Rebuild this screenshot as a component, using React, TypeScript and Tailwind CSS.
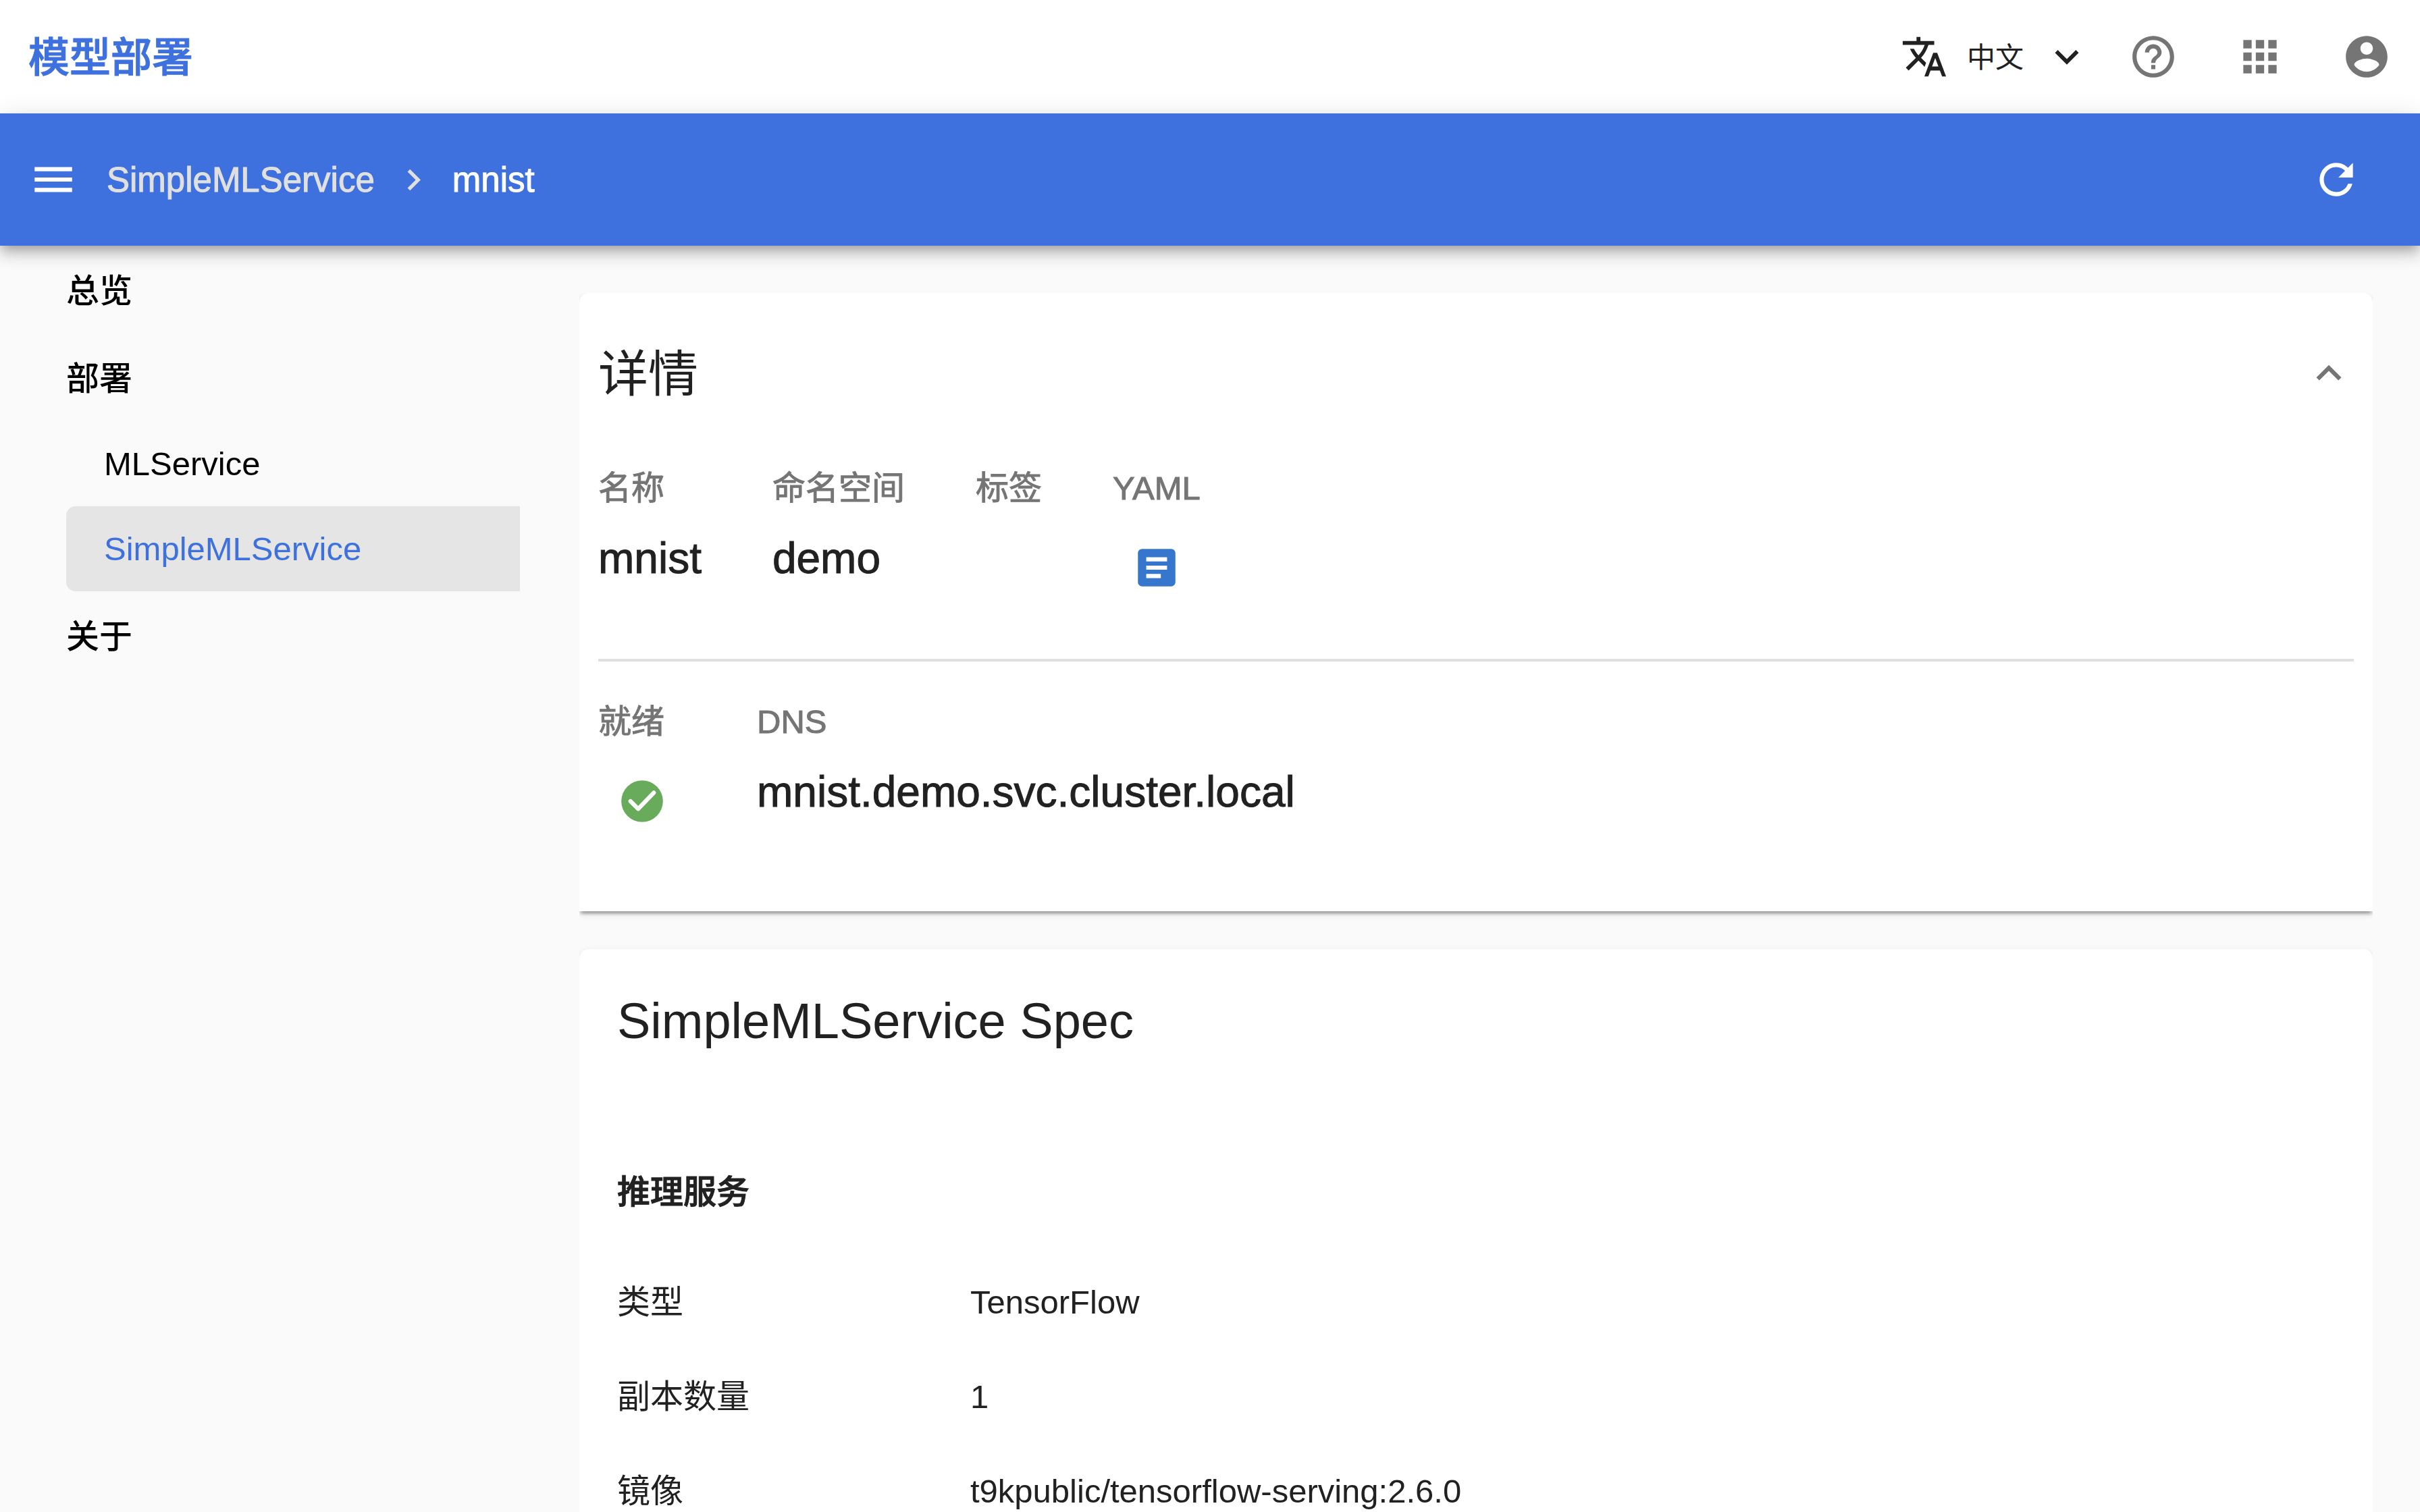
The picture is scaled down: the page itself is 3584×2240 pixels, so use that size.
import React from "react";

const PATHS = {
  translate:
    "M12.87 15.07l-2.54-2.51.03-.03c1.74-1.94 2.98-4.17 3.71-6.53H17V4h-7V2H8v2H1v1.99h11.17C11.5 7.92 10.44 9.75 9 11.35 8.07 10.32 7.3 9.19 6.69 8h-2c.73 1.63 1.73 3.17 2.98 4.56l-5.09 5.02L4 19l5-5 3.11 3.11.76-2.04zM18.5 10h-2L12 22h2l1.12-3h4.75L21 22h2l-4.5-12zm-2.62 7l1.62-4.33L19.12 17h-3.24z",
  expandMore: "M16.59 8.59L12 13.17 7.41 8.59 6 10l6 6 6-6z",
  expandLess: "M12 8l-6 6 1.41 1.41L12 10.83l4.59 4.58L18 14z",
  help: "M11 18h2v-2h-2v2zm1-16C6.48 2 2 6.48 2 12s4.48 10 10 10 10-4.48 10-10S17.52 2 12 2zm0 18c-4.41 0-8-3.59-8-8s3.59-8 8-8 8 3.59 8 8-3.59 8-8 8zm0-14c-2.21 0-4 1.79-4 4h2c0-1.1.9-2 2-2s2 .9 2 2c0 2-3 1.75-3 5h2c0-2.25 3-2.5 3-5 0-2.21-1.79-4-4-4z",
  apps: "M4 8h4V4H4v4zm6 12h4v-4h-4v4zm-6 0h4v-4H4v4zm0-6h4v-4H4v4zm6 0h4v-4h-4v4zm6-10v4h4V4h-4zm-6 4h4V4h-4v4zm6 6h4v-4h-4v4zm0 6h4v-4h-4v4z",
  account:
    "M12 2C6.48 2 2 6.48 2 12s4.48 10 10 10 10-4.48 10-10S17.52 2 12 2zm0 3c1.66 0 3 1.34 3 3s-1.34 3-3 3-3-1.34-3-3 1.34-3 3-3zm0 14.2c-2.5 0-4.71-1.28-6-3.22.03-1.99 4-3.08 6-3.08 1.99 0 5.97 1.09 6 3.08-1.29 1.94-3.5 3.22-6 3.22z",
  menu: "M3 18h18v-2H3v2zm0-5h18v-2H3v2zm0-7v2h18V6H3z",
  chevronRight: "M10 6L8.59 7.41 13.17 12l-4.58 4.59L10 18l6-6z",
  refresh:
    "M17.65 6.35C16.2 4.9 14.21 4 12 4c-4.42 0-7.99 3.58-7.99 8s3.57 8 7.99 8c3.73 0 6.84-2.55 7.73-6h-2.08c-.82 2.33-3.04 4-5.65 4-3.31 0-6-2.69-6-6s2.69-6 6-6c1.66 0 3.14.69 4.22 1.78L13 11h7V4l-2.35 2.35z",
  article:
    "M19 3H5c-1.1 0-2 .9-2 2v14c0 1.1.9 2 2 2h14c1.1 0 2-.9 2-2V5c0-1.1-.9-2-2-2zm-5 14H7v-2h7v2zm3-4H7v-2h10v2zm0-4H7V7h10v2z",
};

function Icon({ name, className = "size-[74px]" }: { name: keyof typeof PATHS; className?: string }) {
  return (
    <svg viewBox="0 0 24 24" fill="currentColor" aria-hidden="true" className={`shrink-0 ${className}`}>
      <path d={PATHS[name]} />
    </svg>
  );
}

function TopBar() {
  return (
    <header className="flex h-[168px] shrink-0 items-center justify-between bg-white px-[42px]">
      <h1 className="pt-1 text-[61px] leading-none font-medium text-[#3e71de] [-webkit-text-stroke:1px]">模型部署</h1>
      <div className="flex items-center gap-[84px] text-[#757575]">
        <div className="-mr-7 flex items-center gap-7 text-[#212121]">
          <Icon name="translate" className="size-[70px]" />
          <div className="grid items-center">
            <select
              aria-label="语言"
              className="col-start-1 row-start-1 appearance-none bg-transparent pt-1 pr-[98px] text-[42px] leading-[70px]"
            >
              <option>中文</option>
            </select>
            <Icon
              name="expandMore"
              className="pointer-events-none col-start-1 row-start-1 size-[70px] justify-self-end"
            />
          </div>
        </div>
        <button type="button" aria-label="帮助">
          <Icon name="help" />
        </button>
        <button type="button" aria-label="应用">
          <Icon name="apps" />
        </button>
        <button type="button" aria-label="账户">
          <Icon name="account" />
        </button>
      </div>
    </header>
  );
}

function Toolbar() {
  return (
    <div className="relative z-10 flex h-[196px] shrink-0 items-center bg-[#3e71de] pr-[87px] pl-[42px] text-white shadow-[0_7px_14px_-4px_rgba(0,0,0,0.2),0_14px_18px_0_rgba(0,0,0,0.14),0_4px_35px_0_rgba(0,0,0,0.12)]">
      <button type="button" aria-label="菜单">
        <Icon name="menu" />
      </button>
      <nav className="ml-[42px] flex flex-1 items-center gap-[26px] text-[51px] leading-none [-webkit-text-stroke:1px]">
        <a href="#list" className="text-[#e0e0e0]">
          SimpleMLService
        </a>
        <Icon name="chevronRight" className="size-[63px] text-[#e0e0e0]" />
        <span aria-current="page">mnist</span>
      </nav>
      <button type="button" aria-label="刷新">
        <Icon name="refresh" />
      </button>
    </div>
  );
}

const heading = "flex h-[130px] items-center pt-1 font-medium";
const entry = "flex h-[126px] items-center rounded-l-[14px] pl-14";

function Sidebar() {
  return (
    <aside className="w-[770px] shrink-0 pl-[98px] text-[49px] leading-none text-black">
      <nav>
        <a href="#overview" className={heading}>
          总览
        </a>
        <h2 className={heading}>部署</h2>
        <a href="#mlservice" className={entry}>
          MLService
        </a>
        <a href="#simplemlservice" aria-current="page" className={`${entry} bg-[#e5e5e5] text-[#3e71de]`}>
          SimpleMLService
        </a>
        <a href="#about" className={heading}>
          关于
        </a>
      </nav>
    </aside>
  );
}

function Field({ label, children }: { label: string; children?: React.ReactNode }) {
  return (
    <div className="flex flex-col gap-[14px]">
      <dt className="text-[49px] leading-[77px] text-[#757575] [-webkit-text-stroke:1px]">{label}</dt>
      <dd className="text-[64px] leading-[102px] [-webkit-text-stroke:1px]">{children}</dd>
    </div>
  );
}

const card =
  "rounded-t-[14px] bg-white shadow-[0_7px_4px_-4px_rgba(0,0,0,0.2),0_4px_4px_0_rgba(0,0,0,0.14),0_4px_11px_0_rgba(0,0,0,0.12)]";

function Details() {
  return (
    <section className={`${card} px-7 pb-[98px]`}>
      <div className="flex h-[238px] items-center justify-between">
        <h2 className="pt-1 text-[74px] leading-none">详情</h2>
        <button type="button" aria-label="收起" className="text-[#757575]">
          <Icon name="expandLess" />
        </button>
      </div>
      <dl className="flex gap-[105px] border-b-4 border-[#e0e0e0] pt-[13px] pb-[70px]">
        <Field label="名称">mnist</Field>
        <Field label="命名空间">demo</Field>
        <Field label="标签" />
        <Field label="YAML">
          <button type="button" aria-label="查看 YAML" className="block p-7 text-[#3676cc]">
            <Icon name="article" />
          </button>
        </Field>
      </dl>
      <dl className="flex gap-[105px] pt-[51px]">
        <Field label="就绪">
          <span role="img" aria-label="已就绪" className="block p-7">
            <svg viewBox="0 0 24 24" className="size-[74px]">
              <circle cx="12" cy="12" r="10" fill="#67ab5b" />
              <path
                d="M6.4 12l3.7 3.7 7.5-7.8"
                fill="none"
                stroke="#fff"
                strokeWidth="2"
                strokeLinecap="round"
                strokeLinejoin="round"
              />
            </svg>
          </span>
        </Field>
        <Field label="DNS">mnist.demo.svc.cluster.local</Field>
      </dl>
    </section>
  );
}

const SPEC = [
  ["类型", "TensorFlow"],
  ["副本数量", "1"],
  ["镜像", "t9kpublic/tensorflow-serving:2.6.0"],
];

function Spec() {
  return (
    <section className={`${card} px-14 pt-14`}>
      <h2 className="text-[74px] leading-[102px]">SimpleMLService Spec</h2>
      <h3 className="mt-[164px] mb-[54px] text-[49px] leading-[77px] font-medium [-webkit-text-stroke:1px]">
        推理服务
      </h3>
      <dl className="text-[49px] leading-none">
        {SPEC.map(([name, value]) => (
          <div key={name} className="flex h-[140px] items-center">
            <dt className="w-[523px]">{name}</dt>
            <dd>{value}</dd>
          </div>
        ))}
      </dl>
    </section>
  );
}

export default function App() {
  return (
    <div className="flex h-screen flex-col overflow-hidden bg-[#fafafa] font-['Liberation_Sans','Noto_Sans_CJK_SC',sans-serif] text-[#212121]">
      <TopBar />
      <Toolbar />
      <div className="flex">
        <Sidebar />
        <main className="min-w-0 flex-1 pt-[70px] pr-[70px] pl-[88px]">
          <div className="flex flex-col gap-14 overflow-hidden">
            <Details />
            <Spec />
          </div>
        </main>
      </div>
    </div>
  );
}
